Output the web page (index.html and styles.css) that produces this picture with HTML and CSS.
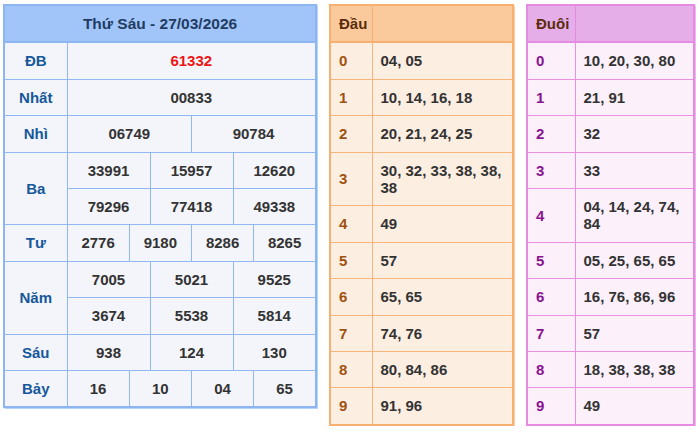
FILE: index.html
```html
<!DOCTYPE html>
<html lang="vi">
<head>
<meta charset="utf-8">
<link rel="stylesheet" href="styles.css">
</head>
<body>
<div class="page">
  <table class="kq">
    <colgroup>
      <col class="c-label">
      <col><col><col><col><col><col><col><col><col><col><col><col>
    </colgroup>
    <thead>
      <tr><th colspan="13" class="title">Thứ Sáu - 27/03/2026</th></tr>
    </thead>
    <tbody>
      <tr><td class="lbl">ĐB</td><td colspan="12" class="db">61332</td></tr>
      <tr><td class="lbl">Nhất</td><td colspan="12">00833</td></tr>
      <tr><td class="lbl">Nhì</td><td colspan="6">06749</td><td colspan="6">90784</td></tr>
      <tr><td class="lbl" rowspan="2">Ba</td><td colspan="4">33991</td><td colspan="4">15957</td><td colspan="4">12620</td></tr>
      <tr><td colspan="4">79296</td><td colspan="4">77418</td><td colspan="4">49338</td></tr>
      <tr><td class="lbl">Tư</td><td colspan="3">2776</td><td colspan="3">9180</td><td colspan="3">8286</td><td colspan="3">8265</td></tr>
      <tr><td class="lbl" rowspan="2">Năm</td><td colspan="4">7005</td><td colspan="4">5021</td><td colspan="4">9525</td></tr>
      <tr><td colspan="4">3674</td><td colspan="4">5538</td><td colspan="4">5814</td></tr>
      <tr><td class="lbl">Sáu</td><td colspan="4">938</td><td colspan="4">124</td><td colspan="4">130</td></tr>
      <tr><td class="lbl">Bảy</td><td colspan="3">16</td><td colspan="3">10</td><td colspan="3">04</td><td colspan="3">65</td></tr>
    </tbody>
  </table>

  <table class="lt dau">
    <colgroup><col class="c-key"><col></colgroup>
    <thead><tr><th>Đầu</th><th></th></tr></thead>
    <tbody>
      <tr><td class="key">0</td><td>04, 05</td></tr>
      <tr><td class="key">1</td><td>10, 14, 16, 18</td></tr>
      <tr><td class="key">2</td><td>20, 21, 24, 25</td></tr>
      <tr><td class="key">3</td><td>30, 32, 33, 38, 38, 38</td></tr>
      <tr><td class="key">4</td><td>49</td></tr>
      <tr><td class="key">5</td><td>57</td></tr>
      <tr><td class="key">6</td><td>65, 65</td></tr>
      <tr><td class="key">7</td><td>74, 76</td></tr>
      <tr><td class="key">8</td><td>80, 84, 86</td></tr>
      <tr><td class="key">9</td><td>91, 96</td></tr>
    </tbody>
  </table>

  <table class="lt duoi">
    <colgroup><col class="c-key"><col></colgroup>
    <thead><tr><th>Đuôi</th><th></th></tr></thead>
    <tbody>
      <tr><td class="key">0</td><td>10, 20, 30, 80</td></tr>
      <tr><td class="key">1</td><td>21, 91</td></tr>
      <tr><td class="key">2</td><td>32</td></tr>
      <tr><td class="key">3</td><td>33</td></tr>
      <tr><td class="key">4</td><td>04, 14, 24, 74, 84</td></tr>
      <tr><td class="key">5</td><td>05, 25, 65, 65</td></tr>
      <tr><td class="key">6</td><td>16, 76, 86, 96</td></tr>
      <tr><td class="key">7</td><td>57</td></tr>
      <tr><td class="key">8</td><td>18, 38, 38, 38</td></tr>
      <tr><td class="key">9</td><td>49</td></tr>
    </tbody>
  </table>
</div>
</body>
</html>
```

FILE: styles.css
```css
* { box-sizing: border-box; }
html, body { margin: 0; padding: 0; background: #ffffff; }
body {
  font-family: "Liberation Sans", Arial, sans-serif;
  font-size: 15px;
  font-weight: bold;
  color: #333333;
}
.page {
  display: flex;
  align-items: flex-start;
  gap: 12px;
  padding: 4px 0 0 3px;
}
table {
  border-collapse: collapse;
  table-layout: fixed;
}
th, td {
  padding: 9px 8px;
  line-height: 17.4px;
  font-weight: bold;
}

/* results table */
.kq {
  width: 314px;
  border: 2px solid #8db5f1;
  box-shadow: 0 0 1px 0.5px #b9d3fa;
  background: #f3f5fa;
}
.kq .c-label { width: 63px; }
.kq th, .kq td {
  border: 1px solid #90b8f2;
  text-align: center;
}
.kq .title {
  background: #a1c5f8;
  color: #1f3c63;
  font-size: 15.5px;
  border: 2px solid #8db5f1;
}
.kq .lbl { color: #16589a; }
.kq .db { color: #ee1515; }

/* loto tables */
.lt th, .lt td { text-align: left; }
.dau {
  width: 185px;
  border: 2px solid #f8b070;
  box-shadow: 0 0 1px 0.5px #fbd0a8;
  background: #fdeee2;
}
.dau .c-key { width: 42px; }
.dau th, .dau td { border: 1px solid #f8b57a; }
.dau thead th { background: #fbca9c; color: #5a2c0c; border-width: 2px 1px 2px 1px; border-color: #f8b070; }
.dau .key { color: #9f520f; }

.duoi {
  width: 169px;
  border: 2px solid #e68be1;
  box-shadow: 0 0 1px 0.5px #f0b9ed;
  background: #fcf0fb;
}
.duoi .c-key { width: 48px; }
.duoi th, .duoi td { border: 1px solid #e98fe4; }
.duoi thead th { background: #e6aee8; color: #5a2c0c; border-width: 2px 1px 2px 1px; border-color: #e68be1; }
.duoi .key { color: #8a148f; }
```
